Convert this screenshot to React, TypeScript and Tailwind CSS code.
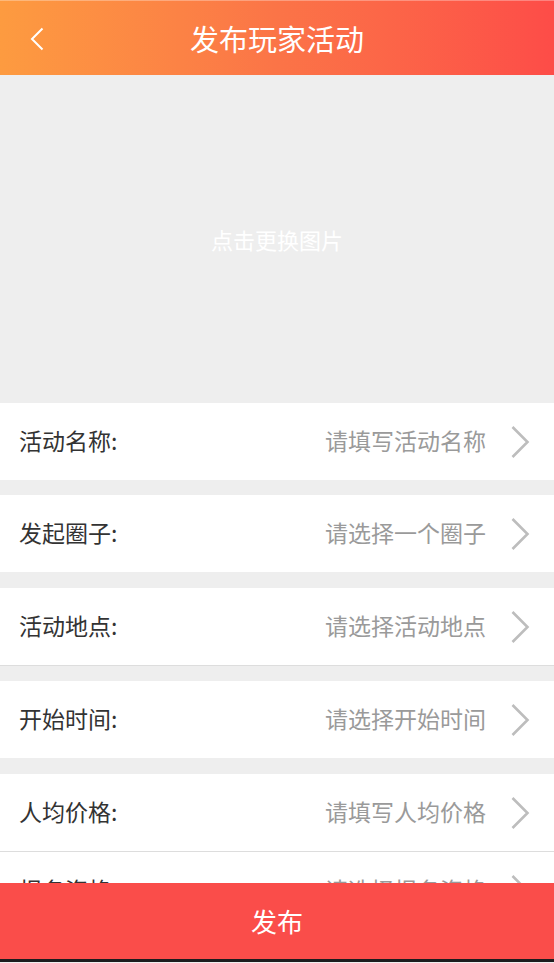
import React from "react";

const rows = [
  { label: "活动名称:", value: "请填写活动名称" },
  { label: "发起圈子:", value: "请选择一个圈子" },
  { label: "活动地点:", value: "请选择活动地点" },
  { label: "开始时间:", value: "请选择开始时间" },
  { label: "人均价格:", value: "请填写人均价格" },
  { label: "报名资格:", value: "请选择报名资格" },
];

function Chevron() {
  return (
    <svg width="20" height="34" viewBox="0 0 20 34" className="shrink-0">
      <polyline points="2.5,2 17.5,17 2.5,32" fill="none" stroke="#bdbdbd" strokeWidth="2.6" />
    </svg>
  );
}

function Row({ label, value, border }: { label: string; value: string; border?: boolean }) {
  return (
    <div
      className={`flex shrink-0 items-center bg-white pl-[19px] pr-[24px] ${
        border ? "h-[78px] border-b border-[#dddddd]" : "h-[77px]"
      }`}
    >
      <span className="text-[23px] text-[#333333] leading-none -mt-[2px]">{label}</span>
      <span className="ml-auto text-[23px] text-[#9a9a9a] leading-none -mt-[2px]">{value}</span>
      <div className="ml-[24px]">
        <Chevron />
      </div>
    </div>
  );
}

export default function App() {
  return (
    <div
      className="w-[554px] h-[963px] flex flex-col overflow-hidden bg-[#eeeeee]"
      style={{ fontFamily: '"Noto Sans CJK SC", "Noto Sans", sans-serif' }}
    >
      <header className="h-[75px] shrink-0 flex items-center relative bg-gradient-to-r from-[#fd9b40] via-[#fb7447] to-[#fd4c48] border-t border-white/30">
        <div className="absolute left-[30px] top-[26px]">
          <svg width="15" height="24" viewBox="0 0 15 24">
            <polyline points="12.5,1.5 2,12 12.5,22.5" fill="none" stroke="#ffffff" strokeWidth="2" />
          </svg>
        </div>
        <h1 className="w-full text-center text-white text-[29px] leading-none">发布玩家活动</h1>
      </header>
      <div className="flex-1 min-h-0 overflow-hidden flex flex-col">
        <div className="h-[328px] shrink-0 flex items-center justify-center bg-[#eeeeee]">
          <span className="text-white text-[22px] leading-none">点击更换图片</span>
        </div>
        <Row {...rows[0]} />
        <div className="mt-[15px] shrink-0">
          <Row {...rows[1]} />
        </div>
        <div className="mt-[16px] shrink-0">
          <Row {...rows[2]} border />
        </div>
        <div className="mt-[15px] shrink-0">
          <Row {...rows[3]} />
        </div>
        <div className="mt-[16px] shrink-0">
          <Row {...rows[4]} border />
          <Row {...rows[5]} />
        </div>
      </div>
      <button className="h-[76px] shrink-0 bg-[#fa4d4a] text-white text-[26px] flex items-center justify-center leading-none">
        发布
      </button>
      <div className="h-[3px] shrink-0 bg-[#1c1c1e]" />
      <div className="h-[1px] shrink-0 bg-[#eeeeee]" />
    </div>
  );
}
